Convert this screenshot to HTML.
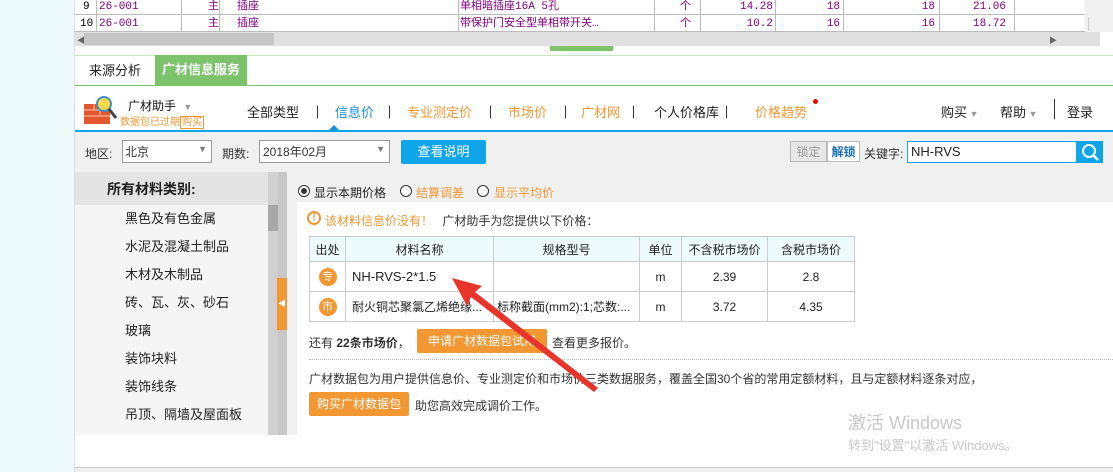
<!DOCTYPE html>
<html><head><meta charset="utf-8"><style>
*{margin:0;padding:0;box-sizing:border-box}
body{width:1113px;height:472px;overflow:hidden;background:#fff;font-family:"Liberation Sans","Noto Sans CJK SC",sans-serif;font-size:12px;color:#333;position:relative}
.a{position:absolute;white-space:nowrap}
.mono{font-family:"Liberation Mono","Noto Sans CJK SC",monospace;font-size:11px;color:#800080;line-height:14px}
.r{text-align:right}
.n{font-size:13px;top:102px}
td{border:1px solid #ccc}
</style></head><body>
<div class="a" style="left:0;top:0;width:75px;height:472px;background:#eefbfd;border-right:1px solid #ddd"></div>
<div class="a" style="left:75px;top:0;width:1038px;height:32px;background:#fff"></div>
<svg class="a" style="left:75px;top:0" width="1038" height="32">
<g stroke="#bbb" stroke-width="1"><line x1="0" y1="14.5" x2="1010" y2="14.5"/><line x1="0" y1="31.5" x2="1010" y2="31.5"/>
<line x1="21.5" y1="0" x2="21.5" y2="32"/><line x1="106.5" y1="0" x2="106.5" y2="32"/><line x1="144.5" y1="0" x2="144.5" y2="32"/><line x1="383.5" y1="0" x2="383.5" y2="32"/><line x1="579.5" y1="0" x2="579.5" y2="32"/><line x1="625.5" y1="0" x2="625.5" y2="32"/><line x1="700.5" y1="0" x2="700.5" y2="32"/><line x1="768.5" y1="0" x2="768.5" y2="32"/><line x1="864.5" y1="0" x2="864.5" y2="32"/><line x1="939.5" y1="0" x2="939.5" y2="32"/></g>
<rect x="1010" y="0" width="28" height="32" fill="#f0f0f0"/>
</svg>
<div class="a mono" style="left:83px;top:0;color:#000">9</div><div class="a mono" style="left:80px;top:17px;color:#000">10</div>
<div class="a mono" style="left:99px;top:0">26-001</div><div class="a mono" style="left:99px;top:17px">26-001</div>
<div class="a mono" style="left:208px;top:0">主</div><div class="a mono" style="left:208px;top:17px">主</div>
<div class="a mono" style="left:237px;top:0">插座</div><div class="a mono" style="left:237px;top:17px">插座</div>
<div class="a mono" style="left:460px;top:0">单相暗插座16A 5孔</div><div class="a mono" style="left:460px;top:17px">带保护门安全型单相带开关…</div>
<div class="a mono" style="left:680px;top:0">个</div><div class="a mono" style="left:680px;top:17px">个</div>
<div class="a mono r" style="left:700px;width:73px;top:0">14.28</div><div class="a mono r" style="left:700px;width:73px;top:17px">10.2</div>
<div class="a mono r" style="left:800px;width:40px;top:0">18</div><div class="a mono r" style="left:800px;width:40px;top:17px">16</div>
<div class="a mono r" style="left:895px;width:40px;top:0">18</div><div class="a mono r" style="left:895px;width:40px;top:17px">16</div>
<div class="a mono r" style="left:950px;width:56px;top:0">21.06</div><div class="a mono r" style="left:950px;width:56px;top:17px">18.72</div>
<div class="a" style="left:1088px;top:17px;width:1px;height:14px;background:#ccc"></div>
<div class="a" style="left:75px;top:32px;width:1025px;height:14px;background:#e0e0e0"></div>
<div class="a" style="left:84px;top:33px;width:190px;height:12px;background:#c6c6c6"></div>
<div class="a" style="left:77px;top:35px;font-size:8px;color:#666">◀</div>
<div class="a" style="left:1049px;top:35px;font-size:8px;color:#666">▶</div>
<div class="a" style="left:550px;top:46px;width:63px;height:5px;background:#7dc36b"></div>
<div class="a" style="left:75px;top:55px;width:1038px;height:1px;background:#c8e6c0"></div>
<div class="a" style="left:75px;top:56px;width:80px;height:29px;background:#fff;font-size:13px;color:#222;text-align:center;line-height:30px">来源分析</div>
<div class="a" style="left:155px;top:55px;width:92px;height:30px;background:#7dc36b;font-size:13px;color:#fff;font-weight:bold;text-align:center;line-height:30px">广材信息服务</div>
<div class="a" style="left:75px;top:85px;width:1038px;height:1px;background:#7dc36b"></div>
<svg class="a" style="left:84px;top:96px" width="34" height="30"><rect x="0" y="8" width="26" height="20" fill="#e4572e"/><g stroke="#f9c9a8" stroke-width="1"><line x1="0" y1="14" x2="26" y2="14"/><line x1="0" y1="20" x2="26" y2="20"/><line x1="10" y1="8" x2="10" y2="14"/><line x1="16" y1="14" x2="16" y2="20"/></g><circle cx="20" cy="8" r="7" fill="#ffd94a" stroke="#3a8fd0" stroke-width="2"/><line x1="25" y1="13" x2="32" y2="22" stroke="#444" stroke-width="3"/></svg>
<div class="a" style="left:128px;top:97px;font-size:12px;color:#111">广材助手 <span style="color:#999;font-size:9px;margin-left:4px">▼</span></div>
<div class="a" style="left:120px;top:113px;font-size:10px;color:#f39733">数据包已过期<span style="border:1px solid #f39733;padding:0 1px">购买</span></div>
<div class="a n" style="left:247px;color:#222">全部类型</div>
<div class="a" style="left:317px;top:106px;width:1px;height:12px;background:#333"></div>
<div class="a n" style="left:335px;color:#1a8fd8">信息价</div>
<div class="a" style="left:389px;top:106px;width:1px;height:12px;background:#333"></div>
<div class="a n" style="left:407px;color:#f39733">专业测定价</div>
<div class="a" style="left:490px;top:106px;width:1px;height:12px;background:#333"></div>
<div class="a n" style="left:508px;color:#f39733">市场价</div>
<div class="a" style="left:565px;top:106px;width:1px;height:12px;background:#333"></div>
<div class="a n" style="left:581px;color:#f39733">广材网</div>
<div class="a" style="left:633px;top:106px;width:1px;height:12px;background:#333"></div>
<div class="a n" style="left:654px;color:#222">个人价格库</div>
<div class="a" style="left:726px;top:106px;width:1px;height:12px;background:#333"></div>
<div class="a n" style="left:755px;color:#f39733">价格趋势</div>
<div class="a" style="left:813px;top:99px;width:5px;height:5px;border-radius:50%;background:#e00"></div>
<div class="a" style="left:329px;top:125px;width:0;height:0;border:5px solid transparent;border-bottom-color:#1a8fd8;border-top:0"></div>
<div class="a" style="left:941px;top:102px;font-size:13px;color:#222">购买<span style="color:#999;font-size:9px"> ▼</span></div>
<div class="a" style="left:1000px;top:102px;font-size:13px;color:#222">帮助<span style="color:#999;font-size:9px"> ▼</span></div>
<div class="a" style="left:1054px;top:99px;width:1px;height:20px;background:#333"></div>
<div class="a" style="left:1067px;top:102px;font-size:13px;color:#222">登录</div>
<div class="a" style="left:75px;top:130px;width:1038px;height:2px;background:#0ea5e9"></div>
<div class="a" style="left:75px;top:132px;width:1038px;height:40px;background:#f0f0f0"></div>
<div class="a" style="left:85px;top:145px;font-size:12px">地区:</div>
<div class="a" style="left:122px;top:140px;width:90px;height:23px;border:1px solid #999;background:#fff;font-size:12px;padding:2px 2px">北京<span class="a" style="right:4px;top:3px;color:#777;font-size:9px">▼</span></div>
<div class="a" style="left:222px;top:145px;font-size:12px">期数:</div>
<div class="a" style="left:259px;top:140px;width:131px;height:23px;border:1px solid #999;background:#fff;font-size:12px;padding:2px 3px">2018年02月<span class="a" style="right:4px;top:3px;color:#777;font-size:9px">▼</span></div>
<div class="a" style="left:401px;top:140px;width:85px;height:24px;background:#0ea5e9;border-radius:2px;color:#fff;font-size:13px;text-align:center;line-height:24px">查看说明</div>
<div class="a" style="left:790px;top:141px;width:37px;height:21px;border:1px solid #bbb;background:#e6e6e6;color:#999;font-size:12px;text-align:center;line-height:20px">锁定</div>
<div class="a" style="left:827px;top:141px;width:33px;height:21px;border:1px solid #bbb;background:#fff;color:#1a6fb8;font-size:12px;text-align:center;line-height:20px;font-weight:bold">解锁</div>
<div class="a" style="left:864px;top:145px;font-size:12px">关键字:</div>
<div class="a" style="left:907px;top:141px;width:170px;height:22px;border:1px solid #0ea5e9;background:#fff;font-size:13px;padding:2px 3px;color:#222">NH-RVS</div>
<div class="a" style="left:1077px;top:141px;width:26px;height:22px;background:#0ea5e9"><svg width="26" height="22"><circle cx="12" cy="10" r="6" fill="none" stroke="#fff" stroke-width="2"/><line x1="16" y1="14" x2="21" y2="19" stroke="#fff" stroke-width="2.5"/></svg></div>
<div class="a" style="left:75px;top:172px;width:193px;height:33px;background:#e4e4e4;font-size:14px;font-weight:bold;color:#222;padding:7px 0 0 32px">所有材料类别:</div>
<div class="a" style="left:75px;top:205px;width:193px;height:230px;background:#f5f5f5"></div>
<div class="a" style="left:268px;top:172px;width:10px;height:263px;background:#d0d0d0"></div>
<div class="a" style="left:268px;top:205px;width:10px;height:26px;background:#a8a8a8"></div>
<div class="a" style="left:278px;top:172px;width:9px;height:263px;background:#c8c8c8"></div>
<div class="a" style="left:277px;top:278px;width:10px;height:52px;background:#f39733;color:#fff;font-size:8px;line-height:52px;text-align:center">◀</div>
<div class="a" style="left:125px;top:205px;font-size:13px;color:#222;line-height:28px">黑色及有色金属<br>水泥及混凝土制品<br>木材及木制品<br>砖、瓦、灰、砂石<br>玻璃<br>装饰块料<br>装饰线条<br>吊顶、隔墙及屋面板</div>
<div class="a" style="left:287px;top:172px;width:826px;height:263px;background:#f0f0f0"></div>
<div class="a" style="left:297px;top:202px;width:816px;height:233px;background:#fff"></div>
<div class="a" style="left:298px;top:185px;width:12px;height:12px;border:1px solid #333;border-radius:50%;background:#fff"><div style="margin:2px;width:6px;height:6px;border-radius:50%;background:#333"></div></div>
<div class="a" style="left:314px;top:184px;font-size:12px;color:#222">显示本期价格</div>
<div class="a" style="left:400px;top:185px;width:12px;height:12px;border:1px solid #333;border-radius:50%;background:#fff"></div>
<div class="a" style="left:416px;top:184px;font-size:12px;color:#f39733">结算调差</div>
<div class="a" style="left:477px;top:185px;width:12px;height:12px;border:1px solid #333;border-radius:50%;background:#fff"></div>
<div class="a" style="left:494px;top:184px;font-size:12px;color:#f39733">显示平均价</div>
<div class="a" style="left:307px;top:211px;width:14px;height:14px;border:2px solid #f39733;border-radius:50%;color:#f39733;font-size:10px;font-weight:bold;text-align:center;line-height:10px">!</div>
<div class="a" style="left:325px;top:212px;font-size:12px;color:#f39733">该材料信息价没有！ <span style="color:#333;margin-left:6px">广材助手为您提供以下价格：</span></div>
<table class="a" style="left:309px;top:236px;border-collapse:collapse;font-size:12px;color:#222;text-align:center;table-layout:fixed;width:545px">
<colgroup><col style="width:36px"><col style="width:148px"><col style="width:146px"><col style="width:42px"><col style="width:86px"><col style="width:87px"></colgroup>
<tr style="height:25px;background:#eefbfd"><td>出处</td><td>材料名称</td><td>规格型号</td><td>单位</td><td>不含税市场价</td><td>含税市场价</td></tr>
<tr style="height:30px"><td><span style="display:inline-block;width:18px;height:18px;border-radius:50%;background:#f39733;color:#fff;font-size:11px;line-height:18px">专</span></td><td style="text-align:left;padding-left:6px;font-size:13px">NH-RVS-2*1.5</td><td></td><td>m</td><td>2.39</td><td>2.8</td></tr>
<tr style="height:30px"><td><span style="display:inline-block;width:18px;height:18px;border-radius:50%;background:#f39733;color:#fff;font-size:11px;line-height:18px">市</span></td><td style="text-align:left;padding-left:6px;overflow:hidden">耐火铜芯聚氯乙烯绝缘...</td><td style="text-align:left;padding-left:3px;overflow:hidden">标称截面(mm2):1;芯数:...</td><td>m</td><td>3.72</td><td>4.35</td></tr>
</table>
<div class="a" style="left:309px;top:334px;font-size:12px;color:#333">还有 <b>22条市场价</b>，</div>
<div class="a" style="left:417px;top:329px;width:130px;height:24px;background:#f39733;border-radius:2px;color:#fff;font-size:12px;text-align:center;line-height:24px">申请广材数据包试用</div>
<div class="a" style="left:552px;top:334px;font-size:12px;color:#333">查看更多报价。</div>
<div class="a" style="left:309px;top:359px;width:804px;border-top:1px dotted #bbb"></div>
<div class="a" style="left:309px;top:370px;font-size:12px;color:#333">广材数据包为用户提供信息价、专业测定价和市场价三类数据服务，覆盖全国30个省的常用定额材料，且与定额材料逐条对应，</div>
<div class="a" style="left:309px;top:392px;width:100px;height:24px;background:#f39733;border-radius:2px;color:#fff;font-size:12px;text-align:center;line-height:24px">购买广材数据包</div>
<div class="a" style="left:415px;top:397px;font-size:12px;color:#333">助您高效完成调价工作。</div>
<svg class="a" style="left:440px;top:270px" width="170" height="130"><polygon points="12,8 42,16 35,22 158,118 154,122 31,27 27,36" fill="#e8342a"/></svg>
<div class="a" style="left:848px;top:409px;font-size:18px;color:#c8c8c8">激活 Windows</div>
<div class="a" style="left:848px;top:435px;font-size:13px;color:#c8c8c8">转到"设置"以激活 Windows。</div>
<div class="a" style="left:75px;top:467px;width:1038px;height:5px;background:#f0f0f0;border-top:1px solid #ccc"></div>
</body></html>
